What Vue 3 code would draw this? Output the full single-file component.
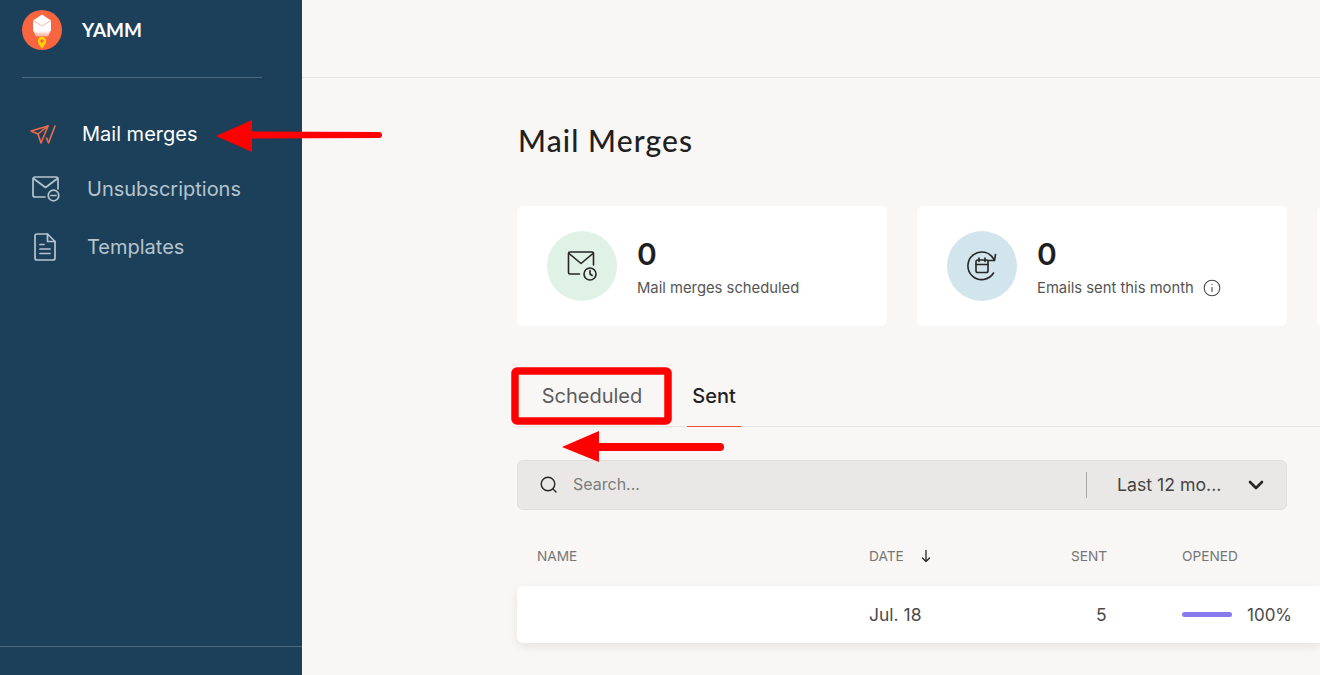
<script setup>
const navItems = [
  { label: 'Mail merges', icon: 'send', active: true },
  { label: 'Unsubscriptions', icon: 'unsub' },
  { label: 'Templates', icon: 'doc' },
]
</script>

<template>
  <div class="page">
    <aside class="sidebar">
      <div class="brand">
        <svg class="logo" width="40" height="40" viewBox="0 0 40 40">
          <defs>
            <linearGradient id="fade" x1="0" y1="0" x2="0" y2="1">
              <stop offset="0" stop-color="#ffffff" />
              <stop offset="1" stop-color="#f9a48c" />
            </linearGradient>
          </defs>
          <circle cx="20" cy="20" r="20" fill="#f96540" />
          <path d="M11 10.500 20 4.500l9 6v10.500H11z" fill="#fff" />
          <path d="M11 10.500 20 16l9-5.500" fill="none" stroke="#f8b9a6" stroke-width="1" />
          <path d="M11.500 21h17l-2.500 5.500H14z" fill="url(#fade)" />
          <path d="M20 38.500c-2.300-3-4.200-5-4.200-7.500a4.200 4.200 0 0 1 8.400 0c0 2.500-1.900 4.500-4.200 7.500z" fill="#ffd400" />
          <circle cx="20" cy="31" r="1.800" fill="#f96540" />
        </svg>
        <span class="brand-name">YAMM</span>
      </div>
      <nav class="nav">
        <div v-for="item in navItems" :key="item.label" class="nav-item" :class="{ active: item.active }">
          <svg v-if="item.icon === 'send'" class="nav-icon send" width="26" height="22" viewBox="0 0 26 22" fill="none" stroke="#f0694a" stroke-width="1.600" stroke-linejoin="round" stroke-linecap="round">
            <path d="M1 8 18 3l-7 17-3-9z" />
            <path d="M8 11 18 3" />
            <path d="M25 3l-6.500 17-2-5" />
          </svg>
          <svg v-else-if="item.icon === 'unsub'" class="nav-icon unsub" width="28" height="26" viewBox="0 0 28 26" fill="none" stroke="#b5c4cf" stroke-width="1.700" stroke-linecap="round" stroke-linejoin="round">
            <path d="M13 21H3a2 2 0 0 1-2-2V3a2 2 0 0 1 2-2h21a2 2 0 0 1 2 2v10" />
            <path d="M1.500 2.500 13.500 11.500 25.500 2.500" />
            <circle cx="21.500" cy="19.500" r="5.300" />
            <path d="M19 19.500h5" />
          </svg>
          <svg v-else class="nav-icon doc" width="24" height="28" viewBox="0 0 24 28" fill="none" stroke="#b5c4cf" stroke-width="1.700" stroke-linecap="round" stroke-linejoin="round">
            <path d="M14.500 1H4a2 2 0 0 0-2 2v22a2 2 0 0 0 2 2h16a2 2 0 0 0 2-2V8.500z" />
            <path d="M14.500 1v7.500H22" />
            <path d="M7 11.500h4M7 16h10M7 20.500h10" />
          </svg>
          <span>{{ item.label }}</span>
        </div>
      </nav>
      <div class="side-foot"></div>
    </aside>

    <main class="main">
      <header class="topbar"></header>
      <section class="content">
        <h1 class="title">Mail Merges</h1>

        <div class="cards">
          <div class="card">
            <div class="badge green">
              <svg width="30" height="32" viewBox="0 0 30 32" fill="none" stroke="#262626" stroke-width="1.600" stroke-linecap="round" stroke-linejoin="round">
                <path d="M12.500 24H3a1.500 1.500 0 0 1-1.500-1.500v-19A1.500 1.500 0 0 1 3 2h22a1.500 1.500 0 0 1 1.500 1.500V15" />
                <path d="M2 3.500 14 13.500 26 3.500" />
                <circle cx="23" cy="24" r="6" />
                <path d="M23 20.500V24l2.200 1.500" />
              </svg>
            </div>
            <div class="card-text">
              <div class="num">0</div>
              <div class="cap">Mail merges scheduled</div>
            </div>
          </div>
          <div class="card">
            <div class="badge blue">
              <svg width="32" height="32" viewBox="0 0 32 32" fill="none" stroke="#262626" stroke-width="1.600" stroke-linecap="round" stroke-linejoin="round">
                <path d="M28 9.500A13.800 13.800 0 1 0 27.500 23" />
                <path d="M21.500 10.500h7l1-6" />
                <rect x="10" y="10" width="12" height="12.500" rx="1.800" />
                <path d="M10 14.500h12M13 8v3.500M19 8v3.500" />
              </svg>
            </div>
            <div class="card-text">
              <div class="num">0</div>
              <div class="cap">
                Emails sent this month
                <svg class="info" width="18" height="18" viewBox="0 0 18 18" fill="none" stroke="#4a4a4a" stroke-width="1.100">
                  <circle cx="9" cy="9" r="7.800" />
                  <path d="M9 8v5" />
                  <path d="M9 5v1" />
                </svg>
              </div>
            </div>
          </div>
          <div class="card"></div>
        </div>

        <div class="tabs">
          <div class="tab muted">Scheduled</div>
          <div class="tab current">Sent</div>
        </div>

        <div class="search">
          <div class="search-left">
            <svg width="20" height="20" viewBox="0 0 20 20" fill="none" stroke="#262626" stroke-width="1.400" stroke-linecap="round">
              <circle cx="9" cy="9" r="6.800" />
              <path d="m14 14 3 3" />
            </svg>
            <span class="placeholder">Search...</span>
          </div>
          <div class="range">
            <span class="range-label">Last 12 mo...</span>
            <svg width="18" height="12" viewBox="0 0 18 12" fill="none" stroke="#262626" stroke-width="2.600" stroke-linecap="round" stroke-linejoin="round">
              <path d="m3 3 6 6 6-6" />
            </svg>
          </div>
        </div>

        <div class="thead">
          <span class="c-name">NAME</span>
          <span class="c-date">DATE
            <svg width="12" height="14" viewBox="0 0 12 14" fill="none" stroke="#262626" stroke-width="1.300" stroke-linecap="round" stroke-linejoin="round">
              <path d="M6 1.500v11M2.500 9 6 12.500 9.500 9" />
            </svg>
          </span>
          <span class="c-sent">SENT</span>
          <span class="c-open">OPENED</span>
        </div>
        <div class="trow">
          <span class="c-name"></span>
          <span class="c-date">Jul. 18</span>
          <span class="c-sent val">5</span>
          <span class="c-open val-open"><i class="bar"></i>100%</span>
        </div>
      </section>
    </main>

    <svg class="annotations" width="1320" height="675" viewBox="0 0 1320 675">
      <g fill="#ff0000">
        <path d="M216 136 252 120v32z" />
        <path d="M250 131.500 379 132a3 3 0 0 1 0 6L250 138.500z" />
        <path d="M562 447 599 431v31z" />
        <path d="M597 443H720a4 4 0 0 1 0 8H597z" />
      </g>
      <rect x="515" y="371" width="153" height="50" rx="2" fill="none" stroke="#ff0000" stroke-width="7.500" />
    </svg>
  </div>
</template>

<style>
html, body { margin: 0; background: #f8f7f5; overflow: hidden; }
</style>

<style scoped>
.page {
  position: relative;
  display: flex;
  width: 1320px;
  height: 675px;
  overflow: hidden;
  background: #f8f7f5;
  font-family: Inter, "Liberation Sans", sans-serif;
  color: #1f1f1f;
}
.sidebar {
  flex: 0 0 302px;
  display: flex;
  flex-direction: column;
  background: #1c4059;
  box-sizing: border-box;
}
.brand {
  display: flex;
  align-items: center;
  gap: 20px;
  height: 78px;
  box-sizing: border-box;
  margin: 0 40px 0 22px;
  padding-bottom: 18px;
  border-bottom: 1px solid #4d6a7e;
}
.logo { flex: none; }
.brand-name {
  font-family: Lato, sans-serif;
  font-size: 19px;
  font-weight: 700;
  color: #fff;
}
.nav {
  flex: 1;
  display: flex;
  flex-direction: column;
  padding-top: 30px;
}
.nav-item {
  display: flex;
  align-items: center;
  height: 58px;
  padding-left: 30px;
  font-size: 20px;
  color: #b5c4cf;
}
.nav-item.active {
  height: 52px;
  color: #fff;
}
.nav-icon { flex: none; }
.send { margin-right: 26px; }
.unsub { margin: 0 27px 0 2px; }
.doc { margin: 0 30px 0 3px; }
.side-foot {
  height: 28px;
  border-top: 1px solid #4d6a7e;
}
.main {
  flex: 1;
  min-width: 0;
  display: flex;
  flex-direction: column;
}
.topbar {
  flex: 0 0 78px;
  box-sizing: border-box;
  border-bottom: 1px solid #e6e4e1;
}
.content {
  padding: 0 0 0 215px;
  width: 1100px;
  box-sizing: border-box;
}
.title {
  margin: 42px 0 46px 1px;
  font-family: Lato, sans-serif;
  font-size: 30px;
  line-height: 40px;
  font-weight: 500;
  color: #1f1f1f;
  letter-spacing: 1.100px;
}
.cards {
  display: flex;
  gap: 30px;
}
.card {
  flex: 0 0 370px;
  height: 120px;
  background: #fff;
  border-radius: 6px;
  display: flex;
  align-items: center;
  padding-left: 30px;
  box-sizing: border-box;
  gap: 20px;
}
.badge {
  width: 70px;
  height: 70px;
  border-radius: 50%;
  display: flex;
  align-items: center;
  justify-content: center;
  flex: none;
}
.green { background: #e0f1e6; }
.blue { background: #d2e5ed; }
.card-text { padding-top: 2px; }
.num {
  font-size: 30px;
  font-weight: 600;
  line-height: 36px;
  color: #1f1f1f;
}
.cap {
  margin-top: 6px;
  font-size: 14.800px;
  line-height: 20px;
  color: #555;
  display: flex;
  align-items: center;
  gap: 9px;
}
.tabs {
  display: flex;
  margin-top: 40px;
  height: 61px;
  box-sizing: border-box;
  border-bottom: 1px solid #e6e4e1;
  width: 1000px;
}
.tab {
  box-sizing: border-box;
  height: 60px;
  display: flex;
  align-items: center;
  justify-content: center;
  font-size: 20px;
}
.muted {
  width: 170px;
  padding-right: 20px;
  color: #5c5c5c;
}
.current {
  width: 54px;
  height: 61px;
  padding-bottom: 1px;
  color: #1f1f1f;
  border-bottom: 1px solid #f0553a;
  font-weight: 500;
}
.search {
  margin-top: 33px;
  width: 770px;
  height: 50px;
  box-sizing: border-box;
  display: flex;
  align-items: center;
  justify-content: space-between;
  background: #e9e8e6;
  border: 1px solid #e0dfdc;
  border-radius: 6px;
}
.search-left {
  display: flex;
  align-items: center;
  gap: 14px;
  padding-left: 21px;
}
.placeholder {
  font-size: 16px;
  color: #7b7b7b;
  margin-bottom: 2px;
}
.range {
  display: flex;
  align-items: center;
  justify-content: space-between;
  height: 26px;
  width: 200px;
  box-sizing: border-box;
  padding: 0 21px 0 30px;
  border-left: 1px solid #a5a5a3;
  font-size: 17.700px;
  color: #444;
}
.range-label { margin-bottom: 2px; }
.thead, .trow {
  display: flex;
  align-items: center;
  width: 803px;
  box-sizing: border-box;
}
.thead {
  height: 76px;
  padding: 16px 0 0 20px;
  font-size: 13.700px;
  color: #767676;
}
.trow {
  height: 57px;
  padding-left: 20px;
  background: #fff;
  border-radius: 6px 0 0 6px;
  box-shadow: 0 4px 10px rgba(0, 0, 0, 0.08);
  font-size: 17.500px;
  color: #4a4a4a;
}
.c-name { width: 332px; }
.c-date {
  width: 202px;
  display: flex;
  align-items: center;
  gap: 16px;
}
.c-sent { width: 111px; }
.val { padding-left: 25px; box-sizing: border-box; }
.c-open { white-space: nowrap; }
.val-open {
  display: flex;
  align-items: center;
  gap: 15px;
  font-size: 17px;
}
.bar {
  display: block;
  width: 50px;
  height: 5px;
  border-radius: 3px;
  background: #8a78ee;
}
.annotations {
  position: absolute;
  left: 0;
  top: 0;
  pointer-events: none;
}
</style>
